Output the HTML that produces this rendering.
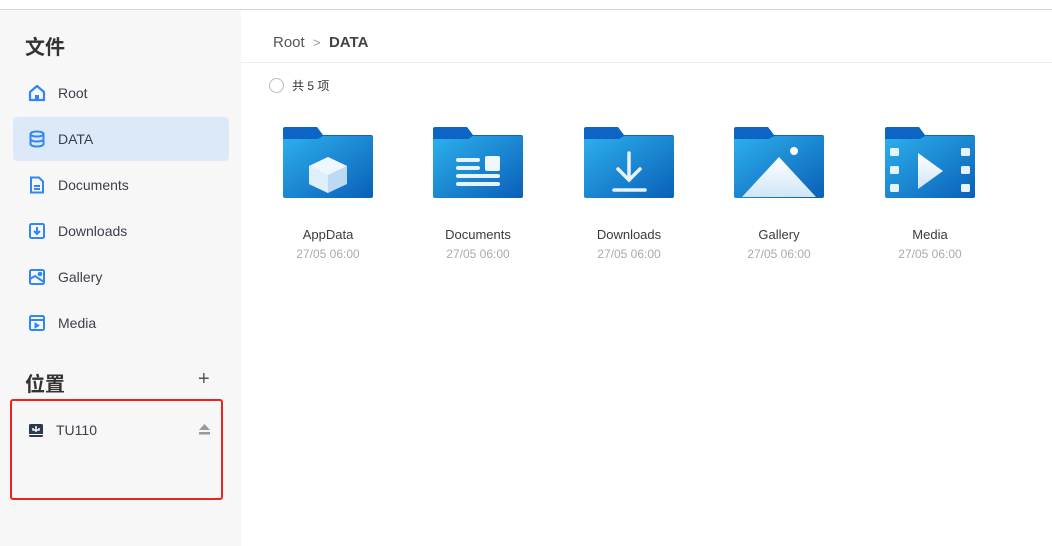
<!DOCTYPE html>
<html><head><meta charset="utf-8"><style>
*{margin:0;padding:0;box-sizing:border-box}
body{width:1052px;height:546px;overflow:hidden;background:#fff;font-family:"Liberation Sans","Noto Sans CJK SC",sans-serif;position:relative}
.top{position:absolute;left:0;top:0;width:1052px;height:10px;background:#fff;border-bottom:1px solid #d6d6d6}
.side{position:absolute;left:0;top:10px;width:241px;height:536px;background:#f7f7f7}
.h{position:absolute;left:25px;font-size:20px;font-weight:bold;color:#333}
.item{position:absolute;left:13px;width:216px;height:44px;border-radius:4px;font-size:14px;color:#3a3f4b;display:flex;align-items:center;padding-left:15px}
.item svg{margin-right:12px}
.sel{background:#dce9f9}
.main{position:absolute;left:241px;top:10px;right:0;bottom:0}
.crumb{position:absolute;left:32px;top:24px;font-size:15px;color:#555}
.hr{position:absolute;left:0;right:0;top:52px;height:1px;background:#eee}
.cnt{position:absolute;left:28px;top:67px;font-size:12px;color:#333;display:flex;align-items:center}
.cnt i{display:inline-block;width:15px;height:15px;border:1.5px solid #bbb;border-radius:50%;margin-right:8px}
.f{position:absolute;top:117px;width:130px;text-align:center}
.f svg{display:block;margin:0 auto}
.n{font-size:13px;color:#3a3a3a;margin-top:28px}
.d{font-size:12px;color:#aaa;margin-top:5px}
</style></head><body>
<div class="top"></div>
<div class="side">
<div class="h" style="top:21px">文件</div>
<div class="item" style="top:61px"><svg width="18" height="18" viewBox="0 0 18 18"><path d="M2 8 9 2l7 6v8H2z" fill="none" stroke="#2f86f6" stroke-width="2.2" stroke-linejoin="round"/><rect x="7" y="11" width="4" height="5" fill="#2f86f6"/></svg>Root</div>
<div class="item sel" style="top:107px"><svg width="18" height="18" viewBox="0 0 18 18" fill="none" stroke="#2f86f6" stroke-width="2"><ellipse cx="9" cy="4" rx="6.5" ry="2.5"/><path d="M2.5 4v10c0 1.4 2.9 2.5 6.5 2.5s6.5-1.1 6.5-2.5V4M2.5 9c0 1.4 2.9 2.5 6.5 2.5s6.5-1.1 6.5-2.5"/></svg>DATA</div>
<div class="item" style="top:153px"><svg width="18" height="18" viewBox="0 0 18 18" fill="none" stroke="#2f86f6" stroke-width="2"><path d="M3 1.5h8l4 4v11H3z"/><path d="M6 10h6M6 13h6"/></svg>Documents</div>
<div class="item" style="top:199px"><svg width="18" height="18" viewBox="0 0 18 18" fill="none" stroke="#2f86f6" stroke-width="2"><rect x="2" y="2" width="14" height="14" rx="1.5"/><path d="M9 5v7M6 9l3 3 3-3"/></svg>Downloads</div>
<div class="item" style="top:245px"><svg width="18" height="18" viewBox="0 0 18 18" fill="none" stroke="#2f86f6" stroke-width="2"><rect x="2" y="2" width="14" height="14" rx="1.5"/><path d="M2 11l5-3 9 6"/><circle cx="12" cy="6" r="1.3" fill="#2f86f6"/></svg>Gallery</div>
<div class="item" style="top:291px"><svg width="18" height="18" viewBox="0 0 18 18" fill="none" stroke="#2f86f6" stroke-width="2"><rect x="2" y="2" width="14" height="14" rx="1.5"/><path d="M2 6h14"/><path d="M7 9v5l4-2.5z" fill="#2f86f6" stroke-width="1"/></svg>Media</div>
<div class="h" style="top:358px">位置</div>
<div style="position:absolute;left:198px;top:358px;font-size:20px;color:#555">+</div>
<div style="position:absolute;left:10px;top:389px;width:213px;height:101px;border:2px solid #f0201a;border-radius:3px"></div>
<div class="item" style="top:398px"><svg width="16" height="16" viewBox="0 0 16 16"><rect x="1" y="2" width="14" height="13" rx="1.5" fill="#2c3a4f"/><path d="M8 4v6M5 6v2h6V6" stroke="#fff" stroke-width="1.5" fill="none"/><rect x="1" y="12" width="14" height="1" fill="#fff"/></svg>TU110</div>
<svg style="position:absolute;left:198px;top:413px" width="13" height="12" viewBox="0 0 13 12"><path d="M6.5 1 12 7H1z" fill="#999"/><rect x="1" y="9" width="11" height="2.5" fill="#999"/></svg>
</div>
<div class="main">
<div class="crumb">Root &nbsp;<span style="color:#999;font-size:13px">&gt;</span>&nbsp; <b style="color:#444">DATA</b></div>
<div class="hr"></div>
<div class="cnt"><i></i>共 5 项</div>
<svg width="0" height="0" style="position:absolute"><defs>
<linearGradient id="g" x1="0" y1="0" x2="1" y2="1"><stop offset="0" stop-color="#2db0ec"/><stop offset="1" stop-color="#0a5fb8"/></linearGradient>
<linearGradient id="w" x1="0" y1="0" x2="0" y2="1"><stop offset="0" stop-color="#fff"/><stop offset="1" stop-color="#cfe6f8"/></linearGradient></defs></svg>
<div class="f" style="left:22px"><svg width="90" height="72" viewBox="0 0 90 72"><path d="M2 0h32l6 8h48a2 2 0 0 1 2 2v10H0V2a2 2 0 0 1 2-2z" fill="#0c65c4"/><path d="M0 12h35l5-3h48a2 2 0 0 1 2 2v58a2 2 0 0 1-2 2H2a2 2 0 0 1-2-2z" fill="url(#g)"/><path d="M45 30l19 9v18l-19 9-19-9V39z" fill="#bcdaf3"/><path d="M45 30l19 9-19 9-19-9z" fill="#eef7fe"/><path d="M26 39l19 9v18l-19-9z" fill="#dff0fc"/></svg><div class="n">AppData</div><div class="d">27/05 06:00</div></div>
<div class="f" style="left:172px"><svg width="90" height="72" viewBox="0 0 90 72"><path d="M2 0h32l6 8h48a2 2 0 0 1 2 2v10H0V2a2 2 0 0 1 2-2z" fill="#0c65c4"/><path d="M0 12h35l5-3h48a2 2 0 0 1 2 2v58a2 2 0 0 1-2 2H2a2 2 0 0 1-2-2z" fill="url(#g)"/><g stroke="#e6f3fc" stroke-width="4" stroke-linecap="round"><path d="M25 33h20M25 41h20M25 49h40M25 57h40"/></g><rect x="52" y="29" width="15" height="15" rx="2" fill="#eef7fe"/></svg><div class="n">Documents</div><div class="d">27/05 06:00</div></div>
<div class="f" style="left:323px"><svg width="90" height="72" viewBox="0 0 90 72"><path d="M2 0h32l6 8h48a2 2 0 0 1 2 2v10H0V2a2 2 0 0 1 2-2z" fill="#0c65c4"/><path d="M0 12h35l5-3h48a2 2 0 0 1 2 2v58a2 2 0 0 1-2 2H2a2 2 0 0 1-2-2z" fill="url(#g)"/><g stroke="#e6f3fc" stroke-width="3.5" stroke-linecap="round" fill="none"><path d="M45 26v27M34 42l11 11 11-11M30 63h31"/></g></svg><div class="n">Downloads</div><div class="d">27/05 06:00</div></div>
<div class="f" style="left:473px"><svg width="90" height="72" viewBox="0 0 90 72"><path d="M2 0h32l6 8h48a2 2 0 0 1 2 2v10H0V2a2 2 0 0 1 2-2z" fill="#0c65c4"/><path d="M0 12h35l5-3h48a2 2 0 0 1 2 2v58a2 2 0 0 1-2 2H2a2 2 0 0 1-2-2z" fill="url(#g)"/><path d="M8 70 45 30l37 40z" fill="url(#w)"/><circle cx="60" cy="24" r="4" fill="#fff"/></svg><div class="n">Gallery</div><div class="d">27/05 06:00</div></div>
<div class="f" style="left:624px"><svg width="90" height="72" viewBox="0 0 90 72"><path d="M2 0h32l6 8h48a2 2 0 0 1 2 2v10H0V2a2 2 0 0 1 2-2z" fill="#0c65c4"/><path d="M0 12h35l5-3h48a2 2 0 0 1 2 2v58a2 2 0 0 1-2 2H2a2 2 0 0 1-2-2z" fill="url(#g)"/><g fill="#e6f3fc"><rect x="5" y="21" width="9" height="8" rx="1.5"/><rect x="5" y="39" width="9" height="8" rx="1.5"/><rect x="5" y="57" width="9" height="8" rx="1.5"/><rect x="76" y="21" width="9" height="8" rx="1.5"/><rect x="76" y="39" width="9" height="8" rx="1.5"/><rect x="76" y="57" width="9" height="8" rx="1.5"/></g><path d="M33 26v36l25-18z" fill="url(#w)"/></svg><div class="n">Media</div><div class="d">27/05 06:00</div></div>
</div>
</body></html>
